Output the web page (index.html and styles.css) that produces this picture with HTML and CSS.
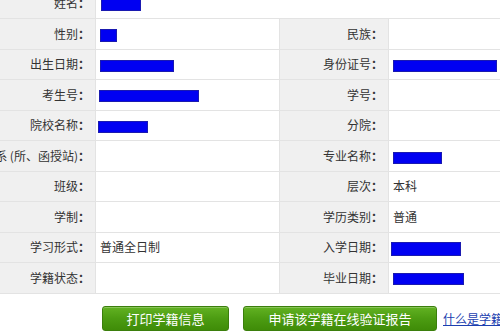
FILE: index.html
```html
<!DOCTYPE html>
<html lang="zh">
<head>
<meta charset="utf-8">
<title>学籍信息</title>
<link rel="stylesheet" href="styles.css">
</head>
<body>
<table class="info">
  <colgroup>
    <col class="c-label">
    <col class="c-value">
    <col class="c-label2">
    <col class="c-value2">
  </colgroup>
  <tr>
    <th>姓名<span class="colon">：</span></th>
    <td colspan="3"><span class="bar b-name"></span></td>
  </tr>
  <tr>
    <th>性别<span class="colon">：</span></th>
    <td><span class="bar b-sex"></span></td>
    <th>民族<span class="colon">：</span></th>
    <td></td>
  </tr>
  <tr>
    <th>出生日期<span class="colon">：</span></th>
    <td><span class="bar b-birth"></span></td>
    <th>身份证号<span class="colon">：</span></th>
    <td><span class="bar b-id"></span></td>
  </tr>
  <tr>
    <th>考生号<span class="colon">：</span></th>
    <td><span class="bar b-exam"></span></td>
    <th>学号<span class="colon">：</span></th>
    <td></td>
  </tr>
  <tr>
    <th>院校名称<span class="colon">：</span></th>
    <td><span class="bar b-school"></span></td>
    <th>分院<span class="colon">：</span></th>
    <td></td>
  </tr>
  <tr>
    <th>院系 (所、函授站)<span class="colon">：</span></th>
    <td></td>
    <th>专业名称<span class="colon">：</span></th>
    <td><span class="bar b-major"></span></td>
  </tr>
  <tr>
    <th>班级<span class="colon">：</span></th>
    <td></td>
    <th>层次<span class="colon">：</span></th>
    <td>本科</td>
  </tr>
  <tr>
    <th>学制<span class="colon">：</span></th>
    <td></td>
    <th>学历类别<span class="colon">：</span></th>
    <td>普通</td>
  </tr>
  <tr>
    <th>学习形式<span class="colon">：</span></th>
    <td>普通全日制</td>
    <th>入学日期<span class="colon">：</span></th>
    <td><span class="bar b-in"></span></td>
  </tr>
  <tr>
    <th>学籍状态<span class="colon">：</span></th>
    <td></td>
    <th>毕业日期<span class="colon">：</span></th>
    <td><span class="bar b-out"></span></td>
  </tr>
</table>
<div class="actions">
  <button class="btn btn-print">打印学籍信息</button>
  <button class="btn btn-apply">申请该学籍在线验证报告</button>
  <a class="help" href="#">什么是学籍在线验证报告？</a>
</div>
</body>
</html>
```
FILE: styles.css
```css
html, body {
  margin: 0;
  padding: 0;
  background: #fff;
  overflow: hidden;
  width: 500px;
  height: 333px;
}
body {
  font-family: "Noto Sans CJK SC", "Noto Sans", sans-serif;
  font-size: 12px;
  color: #333;
}
.info {
  border-collapse: collapse;
  table-layout: fixed;
  width: 578px;
  margin-left: -40px;
  margin-top: -12.5px;
}
.c-label { width: 135px; }
.c-value { width: 184px; }
.c-label2 { width: 109px; }
.c-value2 { width: 150px; }
.info tr { height: 30.5px; }
.info th, .info td {
  border: 1px solid #e3e3e3;
  padding: 0;
  white-space: nowrap;
  overflow: hidden;
  font-weight: normal;
  vertical-align: middle;
  line-height: 16px;
}
.info th {
  background: #f0f0f0;
  text-align: right;
  padding-right: 5px;
}
.colon {
  font-family: "Noto Sans CJK JP", sans-serif;
  font-weight: bold;
}
.info td {
  background: #fff;
  text-align: left;
  padding-left: 4px;
}
.bar {
  display: inline-block;
  vertical-align: middle;
  height: 12px;
  background: #0000f2;
  border: 1px solid #1a1ab0;
  box-sizing: border-box;
}
.b-name { width: 40px; height: 13px; margin-left: 1px; }
.b-sex { width: 17px; height: 13px; }
.b-birth { width: 74px; }
.b-exam { width: 100px; margin-left: -1px; }
.b-school { width: 50px; margin-left: -2px; }
.b-id { width: 104px; }
.b-major { width: 49px; margin-top: 1px; }
.b-in { width: 70px; height: 14px; margin-left: -2px; }
.b-out { width: 71px; height: 12px; }
.actions {
  display: flex;
  align-items: center;
  padding-left: 102px;
  margin-top: 12px;
}
.btn {
  flex: 0 0 auto;
  height: 25px;
  padding: 0;
  border: 1px solid #3b7f0c;
  border-radius: 3px;
  background: linear-gradient(#62b222, #4c9c12 50%, #3f8c08);
  color: #fff;
  font-family: "Noto Sans CJK SC", "Noto Sans", sans-serif;
  font-size: 13px;
  line-height: 23px;
  box-shadow: inset 0 1px 0 rgba(255,255,255,0.25);
}
.btn-print { width: 127px; }
.btn-apply { width: 194px; margin-left: 14px; }
.help {
  flex: 0 0 auto;
  margin-left: 6px;
  color: #1c3fb0;
  text-decoration: underline;
  font-size: 12px;
  white-space: nowrap;
}
```
